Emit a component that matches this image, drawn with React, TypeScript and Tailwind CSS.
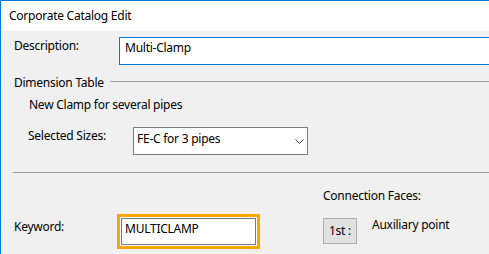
export default function App() {
  return (
    <div className="w-[489px] h-[254px] overflow-hidden bg-[#f0f0f0] border-l border-t border-[#0078d7] text-[12px] leading-[16px] tracking-[-0.25px] text-black font-['Segoe_UI','Noto_Sans',sans-serif]">
      <div className="h-[30px] bg-white pl-[8px] flex items-center">Corporate Catalog Edit</div>

      <div className="pt-[6px]">
        {/* description */}
        <div className="flex h-[28px]">
          <div className="w-[118px] shrink-0 pl-[13px] pt-[1px]">Description:</div>
          <div className="w-[380px] shrink-0 h-[28px] border border-[#0078d7] bg-white pl-[5px] pt-[2px]">Multi-Clamp</div>
        </div>

        {/* dimension table group */}
        <div className="mt-[10px] flex items-start">
          <div className="w-[109px] shrink-0 pl-[13px]">Dimension Table</div>
          <div className="flex-1 h-px bg-[#a0a0a0] mt-[6px]" />
        </div>
        <div className="mt-[6px] pl-[28px]">New Clamp for several pipes</div>

        <div className="mt-[14px] flex items-start">
          <div className="w-[132px] shrink-0 pl-[27px] pt-[1px]">Selected Sizes:</div>
          <div className="w-[175px] h-[28px] shrink-0 border border-[#7a7a7a] bg-white flex items-start pl-[3px] pt-[3px]">
            <span className="flex-1">FE-C for 3 pipes</span>
            <svg width="9" height="5" viewBox="0 0 9 5" className="mt-[8px] mr-[3px]">
              <path d="M0.5 0.5 L4.5 4.5 L8.5 0.5" fill="none" stroke="#404040" strokeWidth="1" />
            </svg>
          </div>
        </div>

        <div className="mt-[17px] ml-[12px] h-px bg-[#a0a0a0]" />

        <div className="mt-[15px] pl-[322px]">Connection Faces:</div>

        <div className="mt-[10px] flex items-start">
          <div className="w-[116px] shrink-0 pl-[13px] mt-[5px]">Keyword:</div>
          <div className="w-[143px] h-[35px] shrink-0 border-[3px] border-[#f7a800] bg-white p-px">
            <div className="h-full border border-[#7a7a7a] bg-white pl-[3px] pt-[2px]">MULTICLAMP</div>
          </div>
          <div className="ml-[63px] mt-[4px] w-[34px] h-[26px] shrink-0 border border-[#adadad] bg-[#e1e1e1] flex items-center justify-center">1st :</div>
          <div className="ml-[15px] mt-[3px]">Auxiliary point</div>
        </div>
      </div>
    </div>
  );
}
